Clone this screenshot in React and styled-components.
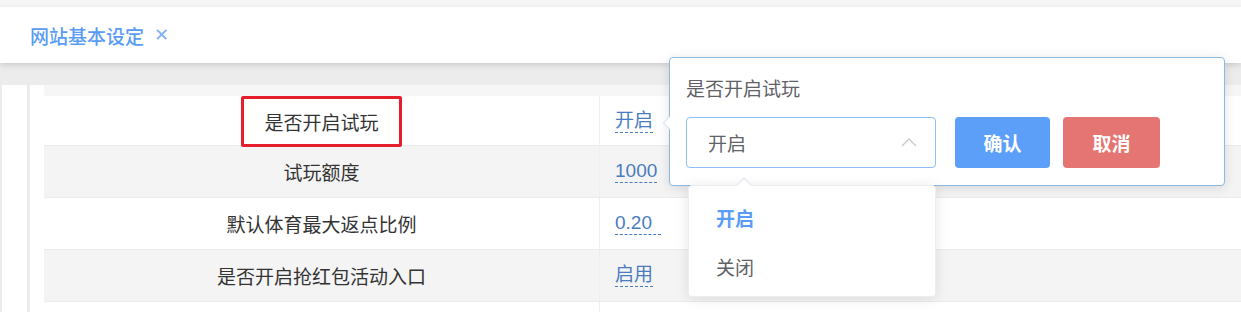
import React from "react";
import styled, { createGlobalStyle } from "styled-components";

const GlobalStyle = createGlobalStyle`
    body {
        margin: 0;
        background: #ffffff;
        font-family: "Liberation Sans", "Noto Sans CJK SC", sans-serif;
    }
`;

const Page = styled.div`
    position: relative;
    width: 1241px;
    height: 312px;
    overflow: hidden;
    background: #f6f6f6;
`;

const TopStrip = styled.div`
    height: 7px;
    background: #f6f6f6;
`;

const TabBar = styled.div`
    position: relative;
    z-index: 1;
    height: 56px;
    background: #ffffff;
    box-shadow: 0 2px 6px rgba(0, 0, 0, 0.14);
    display: flex;
    align-items: center;
    padding-left: 30px;
`;

const Tab = styled.div`
    display: flex;
    align-items: center;
    gap: 10px;
    font-size: 19px;
    font-weight: 500;
    color: #5a9cf5;
    span {
        font-size: 18px;
        font-weight: 300;
        color: #7fb0f3;
    }
`;

const GrayGap = styled.div`
    height: 22px;
    background: #ececec;
`;

const Content = styled.div`
    display: flex;
    height: 227px;
`;

const Gutter = styled.div`
    width: ${(p) => p.w}px;
    flex-shrink: 0;
    background: ${(p) => p.bg};
`;

const TableArea = styled.div`
    flex: 1;
    padding-top: 11px;
    background: #f6f6f6;
`;

const Row = styled.div`
    display: grid;
    grid-template-columns: 556px 1fr;
    height: ${(p) => (p.first ? 50 : 52)}px;
    background: ${(p) => (p.striped ? "#f4f4f4" : "#ffffff")};
    border-bottom: 1px solid #ebebeb;
    box-sizing: border-box;
`;

const LabelCell = styled.div`
    display: flex;
    align-items: center;
    justify-content: center;
    font-size: 19px;
    color: #333333;
    border-right: 1px solid #efefef;
`;

const Highlight = styled.span`
    display: inline-flex;
    align-items: center;
    height: 51px;
    padding: 0 20px;
    border: 3px solid #e61e2b;
    border-radius: 2px;
    box-sizing: border-box;
`;

const ValueCell = styled.div`
    display: flex;
    align-items: center;
    padding-left: 15px;
`;

const Value = styled.span`
    font-size: 19px;
    color: #4a7cbf;
    line-height: 22px;
    border-bottom: 1px dashed #4a7cbf;
    padding-right: ${(p) => p.pad || 0}px;
`;

const Popover = styled.div`
    position: absolute;
    left: 669px;
    top: 57px;
    width: 556px;
    height: 129px;
    box-sizing: border-box;
    background: #ffffff;
    border: 1px solid #8cb9e3;
    border-radius: 4px;
    box-shadow: 0 2px 12px rgba(0, 0, 0, 0.12);
    padding: 18px 0 0 16px;
    z-index: 5;
    &::before {
        content: "";
        position: absolute;
        left: -7px;
        top: 58px;
        border-style: solid;
        border-width: 7px 7px 7px 0;
        border-color: transparent #c9dbeb transparent transparent;
    }
    &::after {
        content: "";
        position: absolute;
        left: -6px;
        top: 59px;
        border-style: solid;
        border-width: 6px 6px 6px 0;
        border-color: transparent #ffffff transparent transparent;
    }
`;

const PopTitle = styled.div`
    font-size: 19px;
    color: #5f6266;
    line-height: 28px;
`;

const Controls = styled.div`
    display: flex;
    align-items: center;
    margin-top: 13px;
`;

const Select = styled.div`
    position: relative;
    width: 250px;
    height: 51px;
    box-sizing: border-box;
    border: 1px solid #8fbdf5;
    border-radius: 4px;
    display: flex;
    align-items: center;
    justify-content: space-between;
    padding: 0 18px 0 21px;
    font-size: 19px;
    color: #5f6266;
    margin-right: 19px;
`;

const Button = styled.button`
    width: ${(p) => p.w}px;
    height: 51px;
    border: none;
    border-radius: 4px;
    background: ${(p) => p.bg};
    color: #ffffff;
    font-family: inherit;
    font-size: 19px;
    font-weight: 700;
    margin-right: 13px;
    padding: 0;
`;

const Dropdown = styled.div`
    position: absolute;
    left: 1px;
    top: 67px;
    width: 248px;
    height: 112px;
    box-sizing: border-box;
    background: #ffffff;
    border: 1px solid #eceef2;
    border-radius: 4px;
    box-shadow: 0 2px 14px rgba(0, 0, 0, 0.1);
    padding: 7px 0;
    z-index: 6;
    &::before {
        content: "";
        position: absolute;
        left: 47px;
        top: -9px;
        border-style: solid;
        border-width: 0 8px 8px 8px;
        border-color: transparent transparent #e6e9ef transparent;
    }
    &::after {
        content: "";
        position: absolute;
        left: 48px;
        top: -7px;
        border-style: solid;
        border-width: 0 7px 7px 7px;
        border-color: transparent transparent #ffffff transparent;
    }
`;

const Option = styled.div`
    height: 49px;
    display: flex;
    align-items: center;
    padding-left: 27px;
    font-size: 19px;
    color: ${(p) => (p.active ? "#5a9cf5" : "#5f6266")};
    font-weight: ${(p) => (p.active ? 700 : 400)};
`;

const rows = [
    { label: "是否开启试玩", value: "开启", highlight: true },
    { label: "试玩额度", value: "1000" },
    { label: "默认体育最大返点比例", value: "0.20", pad: 9 },
    { label: "是否开启抢红包活动入口", value: "启用" },
    { label: "", value: "" },
];

const App = () => {
    return (
        <Page>
            <GlobalStyle />
            <TopStrip />
            <TabBar>
                <Tab>
                    网站基本设定<span>✕</span>
                </Tab>
            </TabBar>
            <GrayGap />
            <Content>
                <Gutter w={2} bg="#ececec" />
                <Gutter w={25} bg="#ffffff" />
                <Gutter w={3} bg="#ebebeb" />
                <Gutter w={14} bg="#ffffff" />
                <TableArea>
                    {rows.map((r, i) => (
                        <Row key={i} first={i === 0} striped={i % 2 === 1}>
                            <LabelCell>
                                {r.highlight ? <Highlight>{r.label}</Highlight> : r.label}
                            </LabelCell>
                            <ValueCell>
                                {r.value && <Value pad={r.pad}>{r.value}</Value>}
                            </ValueCell>
                        </Row>
                    ))}
                </TableArea>
            </Content>
            <Popover>
                <PopTitle>是否开启试玩</PopTitle>
                <Controls>
                    <Select>
                        开启
                        <svg width="16" height="9" viewBox="0 0 16 9">
                            <polyline
                                points="1,8 8,1 15,8"
                                fill="none"
                                stroke="#c6c9cf"
                                strokeWidth="1.3"
                            />
                        </svg>
                        <Dropdown>
                            <Option active>开启</Option>
                            <Option>关闭</Option>
                        </Dropdown>
                    </Select>
                    <Button w={95} bg="#5b9ff8">确认</Button>
                    <Button w={97} bg="#e57572">取消</Button>
                </Controls>
            </Popover>
        </Page>
    );
};

export default App;
